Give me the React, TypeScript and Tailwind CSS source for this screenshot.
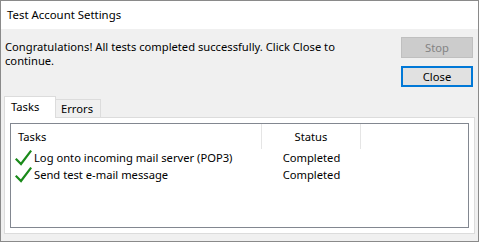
import React from "react";

function Check() {
  return (
    <svg width="17" height="16" viewBox="0 0 17 16" className="shrink-0">
      <path d="M1.5 9.5 L6 14 L15.5 1.5" fill="none" stroke="#1a8a1a" strokeWidth="2.2" strokeLinecap="square" strokeLinejoin="miter" />
    </svg>
  );
}

export default function App() {
  const font = { fontFamily: '"Segoe UI", "Noto Sans", sans-serif' };
  return (
    <div className="w-[479px] h-[242px] border border-[#8a8a8a] bg-[#f0f0f0] flex flex-col text-black text-[11.2px] leading-[14px]" style={font}>
      <div className="h-[28px] bg-white flex items-center pl-[6px] text-[11.4px] shrink-0">
        Test Account Settings
      </div>
      <div className="flex">
        <div className="flex-1 pl-[4px] pt-[11px] pr-[20px] leading-[14px]">
          Congratulations! All tests completed successfully. Click Close to continue.
        </div>
        <div className="flex flex-col gap-[8px] pt-[8px] pr-[5px]">
          <div className="w-[72px] h-[21px] bg-[#cccccc] border border-[#bfbfbf] text-[#838383] flex items-center justify-center">
            Stop
          </div>
          <div className="w-[72px] h-[21px] bg-[#e1e1e1] border-2 border-[#0078d7] flex items-center justify-center">
            Close
          </div>
        </div>
      </div>
      <div className="flex-1 flex flex-col px-[3px] pt-[9px] pb-[7px]">
        <div className="flex items-end h-[22px] relative z-10">
          <div className="w-[52px] h-[22px] bg-white border border-b-0 border-[#dcdcdc] flex items-center pl-[6px] pb-[2px]">
            Tasks
          </div>
          <div className="w-[45px] h-[19px] bg-[#f0f0f0] border border-l-0 border-[#dcdcdc] flex items-center pl-[5px]">
            Errors
          </div>
        </div>
        <div className="flex-1 bg-white border border-[#dcdcdc] -mt-[1px] p-[5px]">
          <div className="h-full border border-[#828790] bg-white">
            <div className="flex h-[25px] items-center">
              <div className="w-[251px] h-full border-r border-[#e5e5e5] flex items-center pl-[7px]">Tasks</div>
              <div className="w-[99px] h-full border-r border-[#e5e5e5] flex items-center justify-center">Status</div>
            </div>
            <div className="flex items-center h-[17px]">
              <div className="w-[251px] flex items-center pl-[4px] gap-[2px]">
                <Check />
                <span>Log onto incoming mail server (POP3)</span>
              </div>
              <div className="w-[99px] text-center">Completed</div>
            </div>
            <div className="flex items-center h-[17px]">
              <div className="w-[251px] flex items-center pl-[4px] gap-[2px]">
                <Check />
                <span>Send test e-mail message</span>
              </div>
              <div className="w-[99px] text-center">Completed</div>
            </div>
          </div>
        </div>
      </div>
    </div>
  );
}
